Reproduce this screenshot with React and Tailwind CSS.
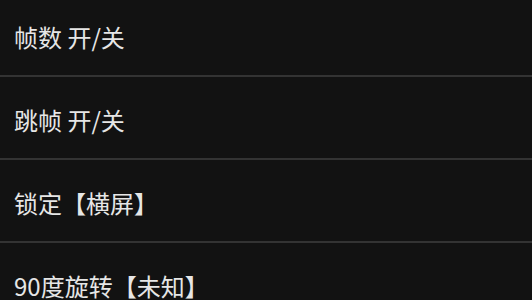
import React from 'react';

const items = ['帧数 开/关', '跳帧 开/关', '锁定【横屏】', '90度旋转【未知】'];

export default function App() {
  return (
    <div
      className="w-[532px] h-[300px] overflow-hidden bg-[#121212]"
      style={{ fontFamily: '"Noto Sans CJK SC", "Noto Sans", sans-serif' }}
    >
      <div className="-mt-[6px]">
        {items.map((label) => (
          <div
            key={label}
            className="h-[83px] flex items-center pl-[14px] pt-[4px] border-b-2 border-[#333333] text-[24px] text-[#e6e6e6] leading-none"
          >
            {label}
          </div>
        ))}
      </div>
    </div>
  );
}
